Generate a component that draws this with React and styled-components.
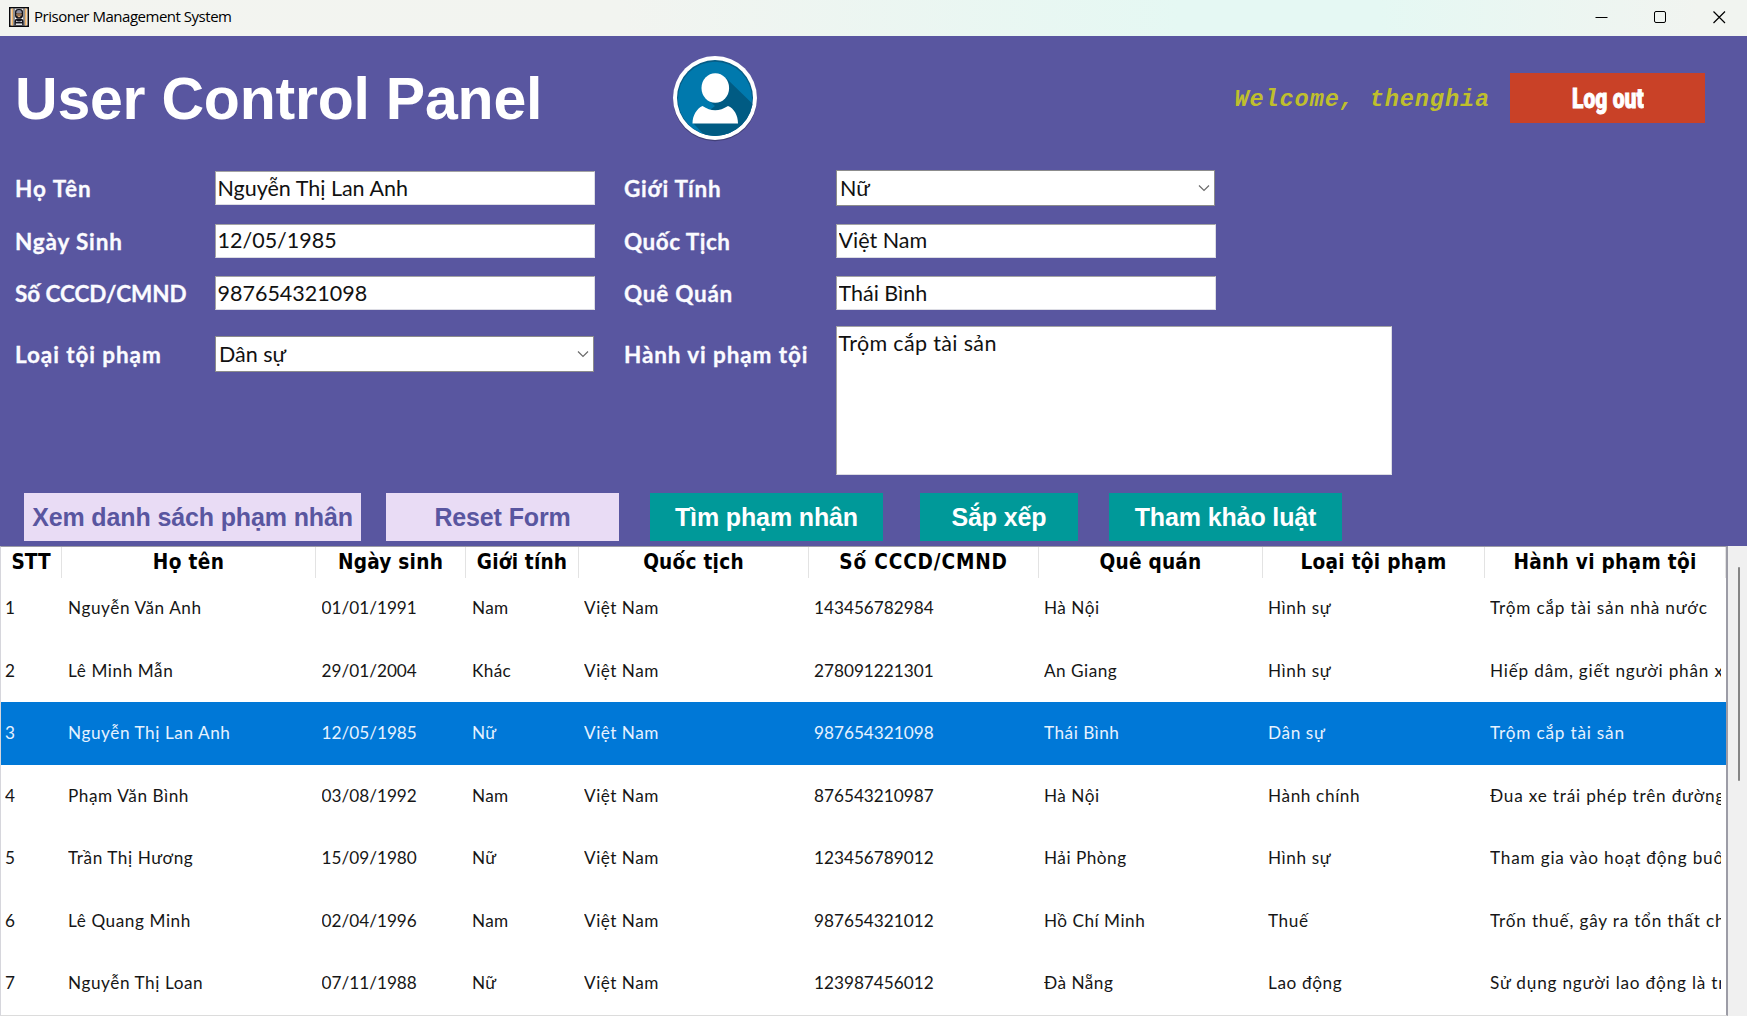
import React from "react";
import styled, { createGlobalStyle } from "styled-components";

const Global = createGlobalStyle`
  * { box-sizing: border-box; }
  html, body { margin: 0; padding: 0; }
  body { overflow: hidden; font-family: Lato, "Open Sans", sans-serif; }
  button, input, textarea { font: inherit; }
`;

const Window = styled.div`
  width: 1747px;
  height: 1016px;
  display: flex;
  flex-direction: column;
  overflow: hidden;
  background: #5956a0;
`;

const TitleBar = styled.header`
  height: 36px;
  flex: none;
  display: flex;
  align-items: center;
  padding: 0 21px 2px 9px;
  background: linear-gradient(90deg, #f3f4f0 0, #f2f4f0 620px, #e5f8f3 1180px, #e5f8f3 1380px, #f1f4f0 1700px);
`;

const WindowTitle = styled.span`
  flex: 1;
  margin: 0 0 2px 5px;
  font: 15px/20px "Open Sans", sans-serif;
  letter-spacing: -0.48px;
  color: #000;
`;

const WindowButtons = styled.div`
  display: flex;
  gap: 46px;
`;

const Header = styled.section`
  height: 125px;
  flex: none;
  display: flex;
  align-items: center;
  padding: 0 42px 0 15px;
`;

const Title = styled.h1`
  margin: 0;
  width: 656px;
  font: bold 59px/68px "Liberation Sans", Arial, sans-serif;
  letter-spacing: -0.22px;
  color: #fff;
`;

const Welcome = styled.span`
  margin: 2px 0 0 auto;
  font: italic bold 23.6px/28px "Liberation Mono", monospace;
  letter-spacing: 0.87px;
  color: #bfbf2c;
`;

const LogOut = styled.button`
  width: 195px;
  height: 50px;
  margin: -1px 0 0 20px;
  padding: 0;
  border: 0;
  background: #c94127;
  color: #fff;
`;

const Condensed = styled.span`
  display: inline-block;
  font: 900 27px/52px Roboto, sans-serif;
  transform: scaleX(0.78);
  -webkit-text-stroke: 0.9px #fff;
`;

const Form = styled.form`
  height: 326px;
  flex: none;
  display: grid;
  grid-template-columns: 200px 409px 212px 1fr;
  grid-template-rows: 53px 52px 53px 1fr;
  padding-left: 15px;
  align-items: center;
`;

const Label = styled.label`
  font-weight: bold;
  font-size: 22.5px;
  line-height: 28px;
  letter-spacing: ${(p) => p.$track || 0}px;
  color: #fbfbff;
  -webkit-text-stroke: 0.3px #fbfbff;
  white-space: nowrap;
  align-self: ${(p) => (p.$top ? "start" : "center")};
  margin-top: ${(p) => (p.$top ? 22 : 3)}px;
`;

const Field = styled.input`
  width: 380px;
  height: 34px;
  margin-top: 1px;
  padding: 0 1px 1px 1.5px;
  border: 1px solid #dcdce4;
  border-top-color: #a3a3a3;
  border-left-color: #a3a3a3;
  background: #fff;
  font-size: 21.5px;
  color: #111;
  outline: 0;
`;

const Combo = styled.div`
  width: 379px;
  height: 36px;
  display: flex;
  align-items: center;
  justify-content: space-between;
  padding: 0 4px 1px 3px;
  border: 1px solid #8c8c8c;
  background: #fff;
  font-size: 21.5px;
  color: #111;
  align-self: ${(p) => (p.$top ? "start" : "center")};
  margin-top: ${(p) => (p.$top ? 17 : 1)}px;
`;

const Area = styled.textarea`
  width: 556px;
  height: 149px;
  margin-top: 7px;
  padding: 1px 1px 0 1.5px;
  border: 1px solid #dcdce4;
  border-top-color: #a3a3a3;
  border-left-color: #a3a3a3;
  background: #fff;
  font-size: 21.5px;
  line-height: 30px;
  letter-spacing: 0.35px;
  color: #111;
  resize: none;
  outline: 0;
  align-self: start;
`;

const Actions = styled.div`
  height: 59px;
  flex: none;
  display: flex;
  padding: 6px 0 0 24px;
`;

const Action = styled.button`
  width: ${(p) => p.$w}px;
  height: 48px;
  margin-right: ${(p) => p.$gap}px;
  padding: 0;
  border: 0;
  background: ${(p) => (p.$soft ? "#e9dcf5" : "#009999")};
  color: ${(p) => (p.$soft ? "#5956a0" : "#fff")};
  font: bold 25px/48px "Liberation Sans", Arial, sans-serif;
  letter-spacing: -0.13px;
  white-space: nowrap;
`;

const TableArea = styled.div`
  flex: 1;
  display: flex;
  min-height: 0;
`;

const Grid = styled.div`
  width: 1728px;
  border: 1px solid #9c9ca6;
  border-left-color: #d6d6dc;
  border-bottom-color: #dcdcdc;
  border-right-width: 2px;
  background: #fff;
  overflow: hidden;
`;

const Row = styled.div`
  height: ${(p) => (p.$head ? 30 : 62.5)}px;
  display: grid;
  grid-template-columns: 61px 254px 150px 113px 230px 230px 224px 222px 241px;
  background: ${(p) => (p.$selected ? "#0078d7" : "transparent")};
  color: ${(p) => (p.$selected ? "#e6f2ff" : "#161616")};
`;

const HeadCell = styled.div`
  border-right: 1px solid #e3e3e3;
  font: bold 20.6px/31px "DejaVu Sans Condensed", "DejaVu Sans", sans-serif;
  font-stretch: condensed;
  letter-spacing: ${(p) => p.$track}px;
  text-align: center;
  color: #000;
  white-space: nowrap;
`;

const Cell = styled.div`
  margin: 0 5px 0 ${(p) => p.$inset}px;
  overflow: hidden;
  white-space: nowrap;
  font-size: 17.2px;
  line-height: 62px;
  letter-spacing: ${(p) => p.$track}px;
`;

const ScrollTrack = styled.div`
  flex: 1;
  padding: 21px 0 0 10px;
  background: #f0f0f0;
`;

const Thumb = styled.div`
  width: 2px;
  height: 214px;
  border-radius: 1px;
  background: #858585;
`;

const AppIcon = () => (
  <svg width="20" height="20" viewBox="0 0 20 20">
    <rect width="20" height="20" fill="#08080c" />
    <rect x="1.500" y="1.500" width="17" height="17" fill="#fff" />
    <path d="M3.200 1.500v17M16.800 1.500v17" stroke="#eda54b" strokeWidth="1.300" />
    <path d="M5 1.500v17M15 1.500v17" stroke="#08080c" strokeWidth=".9" />
    <rect x="6" y="2" width="8" height="9.500" rx="3" fill="#15151d" />
    <path d="M7.200 6q0-3 2.800-3t2.800 3z" fill="#8d8d9c" />
    <path d="M7.500 6.500h5v2l-2.500 2-2.500-2z" fill="#e9b27c" />
    <path d="M8 8h4" stroke="#15151d" strokeWidth=".8" />
    <path d="M5.500 18.500v-4.500q0-2 2.500-2.500h4q2.500.5 2.500 2.500v4.500z" fill="#15151d" />
    <path d="M7 13.500q3 2 6 0v1.500H7z" fill="#c9c9d2" />
    <path d="M6.800 17.200h6.400" stroke="#fff" strokeWidth="1.400" />
  </svg>
);

const Avatar = () => (
  <svg width="88" height="90" viewBox="0 0 88 90">
    <defs>
      <clipPath id="disc"><circle cx="44" cy="44" r="38" /></clipPath>
    </defs>
    <circle cx="44" cy="45.2" r="42" fill="#33325f" opacity=".6" />
    <circle cx="44" cy="44" r="42" fill="#fff" />
    <circle cx="44" cy="44" r="38" fill="#065c85" />
    <circle cx="44" cy="44.7" r="37" fill="#0079ad" />
    <g clipPath="url(#disc)">
      <path d="M55 24L86 54V90H42L22 69L44 52L36 45Z" fill="#005b83" />
    </g>
    <ellipse cx="44.300" cy="34" rx="13.800" ry="14.800" fill="#fff" />
    <path d="M21.500 69.500C21.500 61 26 54.500 31.500 52Q44 60.500 57 52C63 54.500 67 61 67 69.500Z" fill="#fff" />
  </svg>
);

const Chevron = () => (
  <svg width="12" height="12" viewBox="0 0 12 12" fill="none" stroke="#6b6b6b" strokeWidth="1.2">
    <path d="M1 3.500L6 8.500L11 3.500" />
  </svg>
);

const columns = [
  { name: "STT", head: 0, body: 0, inset: 4 },
  { name: "Họ tên", head: 0.35, body: 0.57, inset: 6 },
  { name: "Ngày sinh", head: 0.25, body: 0, inset: 5.5 },
  { name: "Giới tính", head: 0.2, body: 0.35, inset: 6 },
  { name: "Quốc tịch", head: 0.25, body: 0.5, inset: 5 },
  { name: "Số CCCD/CMND", head: 0.85, body: 0, inset: 5 },
  { name: "Quê quán", head: 0.25, body: 0.5, inset: 5 },
  { name: "Loại tội phạm", head: 0.28, body: 0.62, inset: 5 },
  { name: "Hành vi phạm tội", head: 0.3, body: 0.8, inset: 5 },
];

const prisoners = [
  ["1", "Nguyễn Văn Anh", "01/01/1991", "Nam", "Việt Nam", "143456782984", "Hà Nội", "Hình sự", "Trộm cắp tài sản nhà nước"],
  ["2", "Lê Minh Mẫn", "29/01/2004", "Khác", "Việt Nam", "278091221301", "An Giang", "Hình sự", "Hiếp dâm, giết người phân xác"],
  ["3", "Nguyễn Thị Lan Anh", "12/05/1985", "Nữ", "Việt Nam", "987654321098", "Thái Bình", "Dân sự", "Trộm cắp tài sản"],
  ["4", "Phạm Văn Bình", "03/08/1992", "Nam", "Việt Nam", "876543210987", "Hà Nội", "Hành chính", "Đua xe trái phép trên đường"],
  ["5", "Trần Thị Hương", "15/09/1980", "Nữ", "Việt Nam", "123456789012", "Hải Phòng", "Hình sự", "Tham gia vào hoạt động buôn"],
  ["6", "Lê Quang Minh", "02/04/1996", "Nam", "Việt Nam", "987654321012", "Hồ Chí Minh", "Thuế", "Trốn thuế, gây ra tổn thất cho"],
  ["7", "Nguyễn Thị Loan", "07/11/1988", "Nữ", "Việt Nam", "123987456012", "Đà Nẵng", "Lao động", "Sử dụng người lao động là trẻ"],
];

export default function App() {
  return (
    <Window>
      <Global />
      <TitleBar>
        <AppIcon />
        <WindowTitle>Prisoner Management System</WindowTitle>
        <WindowButtons>
          <svg width="13" height="13" viewBox="0 0 13 13" stroke="#000"><path d="M.5 6.500H12.500" /></svg>
          <svg width="13" height="13" viewBox="0 0 13 13" stroke="#000" fill="none"><rect x=".5" y=".5" width="11" height="11" rx="1.500" /></svg>
          <svg width="13" height="13" viewBox="0 0 13 13" stroke="#000" strokeWidth="1.2"><path d="M.5.5L12 12M12 .5L.5 12" /></svg>
        </WindowButtons>
      </TitleBar>
      <Header>
        <Title>User Control Panel</Title>
        <Avatar />
        <Welcome>Welcome, thenghia</Welcome>
        <LogOut><Condensed>Log out</Condensed></LogOut>
      </Header>
      <Form>
        <Label $track={1}>Họ Tên</Label>
        <Field readOnly value="Nguyễn Thị Lan Anh" />
        <Label $track={0.78}>Giới Tính</Label>
        <Combo><span>Nữ</span><Chevron /></Combo>
        <Label $track={0.85}>Ngày Sinh</Label>
        <Field readOnly value="12/05/1985" />
        <Label $track={0.5}>Quốc Tịch</Label>
        <Field readOnly value="Việt Nam" />
        <Label $track={-0.05}>Số CCCD/CMND</Label>
        <Field readOnly value="987654321098" />
        <Label $track={0.75}>Quê Quán</Label>
        <Field readOnly value="Thái Bình" />
        <Label $top $track={0.92}>Loại tội phạm</Label>
        <Combo $top><span>Dân sự</span><Chevron /></Combo>
        <Label $top $track={0.9}>Hành vi phạm tội</Label>
        <Area readOnly value="Trộm cắp tài sản" />
      </Form>
      <Actions>
        <Action $soft $w={337} $gap={25}>Xem danh sách phạm nhân</Action>
        <Action $soft $w={233} $gap={31}>Reset Form</Action>
        <Action $w={233} $gap={37}>Tìm phạm nhân</Action>
        <Action $w={158} $gap={31}>Sắp xếp</Action>
        <Action $w={233} $gap={0}>Tham khảo luật</Action>
      </Actions>
      <TableArea>
        <Grid>
          <Row $head>
            {columns.map((c) => <HeadCell key={c.name} $track={c.head}>{c.name}</HeadCell>)}
          </Row>
          {prisoners.map((p) => (
            <Row key={p[0]} $selected={p[0] === "3"}>
              {p.map((v, i) => (
                <Cell key={i} $track={columns[i].body} $inset={columns[i].inset}>{v}</Cell>
              ))}
            </Row>
          ))}
        </Grid>
        <ScrollTrack><Thumb /></ScrollTrack>
      </TableArea>
    </Window>
  );
}
